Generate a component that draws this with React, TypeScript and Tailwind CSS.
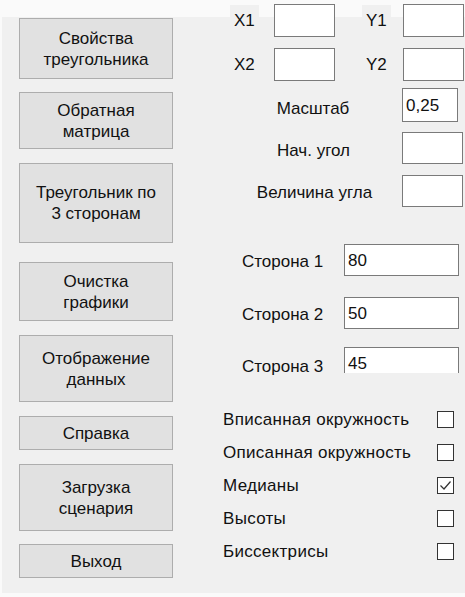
const buttons = [
  { lines: ["Свойства", "треугольника"], h: "h-[61px]", mt: "mt-0" },
  { lines: ["Обратная", "матрица"], h: "h-[57px]", mt: "mt-[13px]" },
  { lines: ["Треугольник по", "3 сторонам"], h: "h-[80px]", mt: "mt-[14px]" },
  { lines: ["Очистка", "графики"], h: "h-[59px]", mt: "mt-[19px]" },
  { lines: ["Отображение", "данных"], h: "h-[67px]", mt: "mt-[14px]" },
  { lines: ["Справка"], h: "h-[34px]", mt: "mt-[14px]" },
  { lines: ["Загрузка", "сценария"], h: "h-[67px]", mt: "mt-[14px]" },
  { lines: ["Выход"], h: "h-[34px]", mt: "mt-[13px]" },
];

const options = [
  { label: "Вписанная окружность", checked: false },
  { label: "Описанная окружность", checked: false },
  { label: "Медианы", checked: true },
  { label: "Высоты", checked: false },
  { label: "Биссектрисы", checked: false },
];

const TextBox = ({ value, className }: { value?: string; className: string }) => (
  <div className={`border border-[#7a7a7a] bg-white pl-[3px] flex items-center leading-none ${className}`}>
    {value}
  </div>
);

const CheckBox = ({ checked }: { checked: boolean }) => (
  <div className="w-[17px] h-[17px] border border-[#333333] bg-white flex items-center justify-center">
    {checked && (
      <svg width="15" height="15" viewBox="0 0 15 15" fill="none">
        <path d="M2.5 7.5 L6 11 L12.5 3.5" stroke="#333333" strokeWidth="1.2" />
      </svg>
    )}
  </div>
);

export default function App() {
  return (
    <div className="w-[465px] h-[597px] bg-[#fafafa] pl-[2px] pb-[4px] text-[17px] text-[#111111] font-['Liberation_Sans',Arial,sans-serif]">
      <div className="h-full flex bg-[linear-gradient(to_bottom,#fafafa_17px,#f0f0f0_17px)]">
        {/* buttons */}
        <div className="w-[218px] pl-[17px] pt-[18px] flex flex-col">
          {buttons.map((b, i) => (
            <div
              key={i}
              className={`w-[154px] ${b.h} ${b.mt} bg-[#e1e1e1] border border-[#adadad] flex flex-col items-center justify-center text-center leading-[21px]`}
            >
              {b.lines.map((l) => (
                <span key={l}>{l}</span>
              ))}
            </div>
          ))}
        </div>

        {/* inputs */}
        <div className="flex-1 flex flex-col pt-[4px]">
          <div className="h-[33px] flex items-center">
            <div className="w-[54px] pl-[10px]">
              <span className="bg-[#f0f0f0] px-[4px] pt-[6px] pb-[1px]">X1</span>
            </div>
            <TextBox className="w-[61px] h-full" />
            <div className="w-[68px] pl-[27px]">
              <span className="bg-[#f0f0f0] px-[4px] pt-[6px] pb-[1px]">Y1</span>
            </div>
            <TextBox className="w-[61px] h-full" />
          </div>
          <div className="h-[33px] mt-[11px] flex items-center">
            <div className="w-[54px] pl-[14px]">X2</div>
            <TextBox className="w-[61px] h-full" />
            <div className="w-[68px] pl-[31px]">Y2</div>
            <TextBox className="w-[61px] h-full" />
          </div>

          <div className="h-[34px] mt-[7px] flex items-center">
            <div className="w-[182px] pl-[4px] text-center pt-[8px]">Масштаб</div>
            <TextBox value="0,25" className="w-[56px] h-full" />
          </div>
          <div className="h-[32px] mt-[10px] flex items-center">
            <div className="w-[182px] pl-[5px] text-center pt-[6px]">Нач. угол</div>
            <TextBox className="w-[61px] h-full" />
          </div>
          <div className="h-[32px] mt-[11px] flex items-center">
            <div className="w-[182px] pl-[7px] text-center pt-[4px]">Величина угла</div>
            <TextBox className="w-[61px] h-full" />
          </div>

          <div className="h-[32px] mt-[37px] flex items-center">
            <div className="w-[124px] pl-[22px] pt-[4px]">Сторона 1</div>
            <TextBox value="80" className="w-[115px] h-full" />
          </div>
          <div className="h-[32px] mt-[21px] flex items-center">
            <div className="w-[124px] pl-[22px] pt-[4px]">Сторона 2</div>
            <TextBox value="50" className="w-[115px] h-full" />
          </div>
          <div className="h-[32px] mt-[18px] flex items-start">
            <div className="w-[124px] pl-[22px] pt-[7px]">Сторона 3</div>
            <div className="h-[26px] overflow-hidden">
              <TextBox value="45" className="w-[115px] h-[32px]" />
            </div>
          </div>

          <div className="mt-[24px] flex flex-col">
            {options.map((o) => (
              <div key={o.label} className="h-[33px] flex items-center">
                <div className="w-[217px] pl-[3px] tracking-[0.3px]">{o.label}</div>
                <CheckBox checked={o.checked} />
              </div>
            ))}
          </div>
        </div>
      </div>
    </div>
  );
}
